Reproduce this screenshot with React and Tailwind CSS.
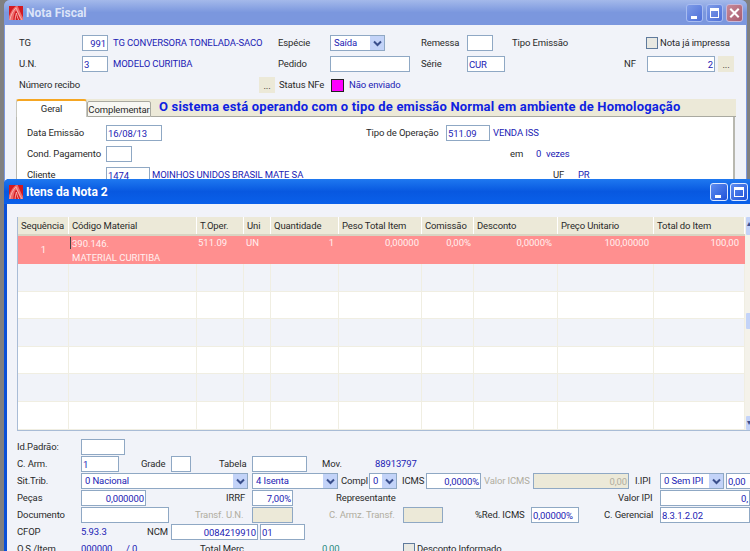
const labelFont = "font-['Roboto','Noto_Sans',sans-serif]";

function Logo() {
  return (
    <svg width="14" height="14" viewBox="0 0 16 16" className="shrink-0">
      <rect width="16" height="16" fill="#d41a20" />
      <path d="M0 16 L0 12 C2 6 5 2 8 0 L10 0 C12 5 14 10 16 13 L16 16 L13 16 C11 11 10 8 8 5 C6 8 5 12 5 16 Z" fill="#ee6a6a" />
      <path d="M1 16 C2 10 5 5 8 2 M8 2 C10 7 12 12 15 16 M7 16 C7 13 8 10 8.5 8 C9 11 10 14 11 16" fill="none" stroke="#f8b8b4" strokeWidth="1" />
    </svg>
  );
}

function WinButton({ kind, active }) {
  const tone = active
    ? "w-[18px] border-[#dce8ff] bg-gradient-to-br from-[#5f8df0] to-[#1f50d8]"
    : "w-[17px] border-[#a8bcf0] bg-gradient-to-br from-[#7f9ce8] to-[#4f6fd8]";
  const close = "w-[17px] border-[#c8b8d8] bg-gradient-to-br from-[#c88a98] to-[#a85c70]";
  return (
    <div className={`h-[18px] rounded-[3px] border relative shrink-0 ${kind === "close" ? close : tone}`}>
      {kind === "min" && <div className="absolute left-[4px] bottom-[2px] w-[6px] h-[3px] bg-white" />}
      {kind === "max" && <div className="absolute left-[3px] top-[3px] right-[3px] bottom-[3px] border border-white border-t-[3px]" />}
      {kind === "close" && (
        <svg viewBox="0 0 16 16" className="absolute inset-0 w-full h-full">
          <path d="M3.5 3.5 L12.5 12.5 M12.5 3.5 L3.5 12.5" stroke="white" strokeWidth="2.2" />
        </svg>
      )}
    </div>
  );
}

function Label({ className = "", children }) {
  return <span className={`text-[#2a2a2a] whitespace-nowrap shrink-0 pt-[1px] ${className}`}>{children}</span>;
}

function Blue({ className = "", children }) {
  return <span className={`text-[#2222b4] whitespace-nowrap shrink-0 pt-[1px] ${className}`}>{children}</span>;
}

function Muted({ className = "", children }) {
  return <span className={`text-[#b0ad9f] whitespace-nowrap shrink-0 pt-[1px] ${className}`}>{children}</span>;
}

function Input({ className = "", right, children }) {
  return (
    <div className={`h-[16px] shrink-0 border border-[#8fa8c4] bg-white text-[#2222b4] px-[1px] leading-[15px] overflow-hidden whitespace-nowrap ${right ? "text-right" : ""} ${className}`}>
      {children}
    </div>
  );
}

function Disabled({ className = "", children }) {
  return (
    <div className={`h-[16px] shrink-0 border border-[#8fa8c4] bg-[#ece9d8] text-[#b0ad9f] text-right px-[1px] leading-[15px] ${className}`}>
      {children}
    </div>
  );
}

function Select({ className = "", children }) {
  return (
    <div className={`h-[16px] shrink-0 border border-[#8fa8c4] bg-white text-[#2222b4] flex items-center pl-[3px] justify-between overflow-hidden ${className}`}>
      <span className="whitespace-nowrap pt-[1px]">{children}</span>
      <div className="w-[14px] h-[14px] shrink-0 bg-[#c3d3f8] flex items-center justify-center">
        <svg width="9" height="7" viewBox="0 0 9 7">
          <path d="M1 1.5 L4.5 5 L8 1.5" fill="none" stroke="#3a4f8c" strokeWidth="2" />
        </svg>
      </div>
    </div>
  );
}

function Dots({ className = "" }) {
  return <div className={`w-[16px] h-[16px] shrink-0 bg-[#ece9d8] text-[#222] text-center leading-[17px] ${className}`}>...</div>;
}

function Check({ className = "" }) {
  return <div className={`w-[12px] h-[12px] shrink-0 border border-[#5f7a9c] bg-[#e8e8e2] ${className}`} />;
}

const columns = [
  ["Sequência", "w-[51px]"],
  ["Código Material", "w-[128px]"],
  ["T.Oper.", "w-[47px]"],
  ["Uni", "w-[27px]"],
  ["Quantidade", "w-[68px]"],
  ["Peso Total Item", "w-[83px]"],
  ["Comissão", "w-[52px]"],
  ["Desconto", "w-[84px]"],
  ["Preço Unitario", "w-[96px]"],
  ["Total do Item", "w-[91px]"],
];

function EmptyRow({ alt, height }) {
  return (
    <div className={`flex ${height} border-b border-[#f0eee2] ${alt ? "bg-[#f1f3f9]" : "bg-white"}`}>
      {columns.map(([name, width]) => (
        <div key={name} className={`${width} h-full border-r border-[#f0eee2] shrink-0`} />
      ))}
    </div>
  );
}

function Scrollbar() {
  return (
    <div className="w-[6px] shrink-0 bg-[#f4f2ea] flex flex-col">
      <div className="h-[18px] ml-[1px] bg-[#c3d3f8] rounded-[1px] text-center text-[#3a4f8c] leading-[14px] text-[8px]">▴</div>
      <div className="h-[78px]" />
      <div className="h-[16px] ml-[1px] bg-[#c3d3f8] rounded-[1px]" />
      <div className="h-[87px]" />
      <div className="h-[14px] ml-[1px] bg-[#c3d3f8] rounded-[1px] text-center text-[#3a4f8c] leading-[13px] text-[8px]">▾</div>
    </div>
  );
}

function ItemsGrid() {
  return (
    <div className="ml-[10px] mt-[13px] w-[745px] flex border-l border-b border-[#a9bcd6]">
      <div className="w-[727px] shrink-0">
        <div className="flex h-[19px] bg-[#ece9d8] border-b-2 border-[#d8d4c2]">
          {columns.map(([name, width]) => (
            <div key={name} className={`${width} shrink-0 border-r border-white pl-[3px] leading-[18px] text-[#2a2a2a] whitespace-nowrap overflow-hidden`}>
              {name}
            </div>
          ))}
        </div>
        <div className="flex h-[28px] bg-[#ff8f8f] text-[#fff0f0] leading-[13px] tracking-normal">
          <div className="w-[51px] text-center leading-[28px]">1</div>
          <div className="w-[128px] pl-[3px] pt-[1px] leading-[14px] relative">
            <div className="absolute left-[1px] top-[1px] w-[1px] h-[12px] bg-[#444]" />
            <div>390.146.</div>
            <div>MATERIAL CURITIBA</div>
          </div>
          <div className="w-[47px] pl-[1px]">511.09</div>
          <div className="w-[27px] pl-[2px]">UN</div>
          <div className="w-[68px] text-right pr-[5px]">1</div>
          <div className="w-[83px] text-right pr-[3px]">0,00000</div>
          <div className="w-[52px] text-right pr-[3px]">0,00%</div>
          <div className="w-[84px] text-right pr-[6px]">0,0000%</div>
          <div className="w-[96px] text-right pr-[5px]">100,00000</div>
          <div className="w-[91px] text-right pr-[6px]">100,00</div>
        </div>
        <EmptyRow alt height="h-[28px]" />
        <EmptyRow height="h-[27px]" />
        <EmptyRow alt height="h-[28px]" />
        <EmptyRow height="h-[27px]" />
        <EmptyRow alt height="h-[28px]" />
        <EmptyRow height="h-[28px]" />
      </div>
      <Scrollbar />
    </div>
  );
}

function NotaFiscal() {
  return (
    <div className="absolute left-[4px] top-0 w-[743px] h-[200px] rounded-t-[6px] bg-[#7b97de] overflow-hidden">
      <div className="h-[25px] flex items-center pl-[5px] pr-[4px] bg-gradient-to-b from-[#a4b9ea] via-[#7b97de] to-[#7b97de]">
        <Logo />
        <span className="ml-[3px] text-[12px] tracking-normal font-bold text-[#dbe4f8]">Nota Fiscal</span>
        <div className="ml-auto flex gap-[3px]">
          <WinButton kind="min" />
          <WinButton kind="max" />
          <WinButton kind="close" />
        </div>
      </div>
      <div className="mx-[1px] h-[175px] bg-[#f1f3f9] pt-[10px]">
        <div className="flex items-center h-[16px]">
          <Label className="ml-[14px] w-[63px]">TG</Label>
          <Input right className="w-[26px]">991</Input>
          <Blue className="ml-[5px] w-[165px]">TG CONVERSORA TONELADA-SACO</Blue>
          <Label className="w-[52px]">Espécie</Label>
          <Select className="w-[55px]">Saída</Select>
          <Label className="ml-[36px] w-[46px]">Remessa</Label>
          <Input className="w-[26px]" />
          <Label className="ml-[19px] w-[134px]">Tipo Emissão</Label>
          <Check />
          <Label className="ml-[2px]">Nota já impressa</Label>
        </div>
        <div className="flex items-center h-[16px] mt-[5px]">
          <Label className="ml-[14px] w-[63px]">U.N.</Label>
          <Input className="w-[26px]">3</Input>
          <Blue className="ml-[5px] w-[165px]">MODELO CURITIBA</Blue>
          <Label className="w-[52px]">Pedido</Label>
          <Input className="w-[80px]" />
          <Label className="ml-[11px] w-[46px]">Série</Label>
          <Input className="w-[38px]">CUR</Input>
          <Label className="ml-[119px] w-[23px]">NF</Label>
          <Input right className="w-[68px]">2</Input>
          <Dots className="ml-[3px]" />
        </div>
        <div className="flex items-center h-[16px] mt-[5px]">
          <Label className="ml-[14px] w-[240px]">Número recibo</Label>
          <Dots />
          <Label className="ml-[4px] w-[52px]">Status NFe</Label>
          <div className="w-[13px] h-[13px] bg-[#ff00ff] border border-[#222]" />
          <Blue className="ml-[5px]">Não enviado</Blue>
        </div>
        <div className="ml-[11px] mt-[6px] w-[720px] h-[18px] bg-[#ece9d8] flex items-end">
          <div className="w-[71px] shrink-0 h-[18px] bg-white border-t-2 border-[#f5a623] border-x border-x-[#c8c8c0] rounded-t-[3px] text-center text-[#2a2a2a] leading-[15px]">Geral</div>
          <div className="w-[64px] shrink-0 h-[16px] bg-[#f7f7f3] border border-[#a9a9a0] rounded-t-[2px] text-center text-[#2a2a2a] leading-[15px] whitespace-nowrap">Complementar</div>
          <div className="flex-1 h-[18px] border-b border-[#a9a9a0] pl-[8px] leading-[16px] text-[13px] tracking-[0.17px] font-bold text-[#0f1fe0] whitespace-nowrap">O sistema está operando com o tipo de emissão Normal em ambiente de Homologação</div>
        </div>
        <div className="ml-[11px] w-[719px] h-[70px] bg-white border-r-2 border-l border-[#b8b8b0] pt-[8px]">
          <div className="flex items-center h-[16px]">
            <Label className="ml-[10px] w-[79px]">Data Emissão</Label>
            <Input className="w-[56px]">16/08/13</Input>
            <Label className="ml-[204px] w-[80px]">Tipo de Operação</Label>
            <Input className="w-[44px]">511.09</Input>
            <Blue className="ml-[3px]">VENDA ISS</Blue>
          </div>
          <div className="flex items-center h-[16px] mt-[5px]">
            <Label className="ml-[10px] w-[79px]">Cond. Pagamento</Label>
            <Input className="w-[26px]" />
            <Label className="ml-[378px] w-[26px]">em</Label>
            <Blue className="w-[10px]">0</Blue>
            <Blue>vezes</Blue>
          </div>
          <div className="flex items-center h-[16px] mt-[5px]">
            <Label className="ml-[10px] w-[79px]">Cliente</Label>
            <Input className="w-[44px]">1474</Input>
            <Blue className="ml-[2px] w-[401px]">MOINHOS UNIDOS BRASIL MATE SA</Blue>
            <Label className="w-[25px]">UF</Label>
            <Blue>PR</Blue>
          </div>
        </div>
      </div>
    </div>
  );
}

function ItensDaNota() {
  return (
    <div className="absolute left-[4px] top-[179px] w-[760px] h-[372px] bg-[#0a50d8] rounded-t-[5px] overflow-hidden">
      <div className="h-[25px] flex items-center pl-[5px] pr-[2px] w-[746px] bg-gradient-to-b from-[#1f78f0] via-[#0858e0] to-[#0a60ea]">
        <Logo />
        <span className="ml-[3px] text-[12px] tracking-normal font-bold text-white">Itens da Nota 2</span>
        <div className="ml-auto flex gap-[2px]">
          <WinButton kind="min" active />
          <WinButton kind="max" active />
        </div>
      </div>
      <div className="ml-[3px] h-[347px] bg-[#f1f3f9] overflow-hidden">
        <ItemsGrid />
        <div className="mt-[8px] flex items-center h-[16px]">
          <Label className="ml-[10px] w-[64px]">Id.Padrão:</Label>
          <Input className="w-[44px]" />
        </div>
        <div className="mt-[1px] flex items-center h-[16px]">
          <Label className="ml-[10px] w-[64px]">C. Arm.</Label>
          <Input className="w-[38px]">1</Input>
          <Label className="ml-[22px] w-[30px]">Grade</Label>
          <Input className="w-[20px]" />
          <Label className="ml-[28px] w-[33px]">Tabela</Label>
          <Input className="w-[55px]" />
          <Label className="ml-[15px] w-[53px]">Mov.</Label>
          <Blue>88913797</Blue>
        </div>
        <div className="mt-[1px] flex items-center h-[16px]">
          <Label className="ml-[10px] w-[64px]">Sit.Trib.</Label>
          <Select className="w-[167px]">0 Nacional</Select>
          <Select className="ml-[4px] w-[86px]">4 Isenta</Select>
          <Label className="ml-[3px] w-[28px]">Compl</Label>
          <Select className="w-[28px]">0</Select>
          <Label className="ml-[5px] w-[24px]">ICMS</Label>
          <Input right className="w-[55px]">0,0000%</Input>
          <Muted className="ml-[3px] w-[49px]">Valor ICMS</Muted>
          <Disabled className="w-[96px]">0,00</Disabled>
          <Label className="ml-[6px] w-[25px]">I.IPI</Label>
          <Select className="w-[64px]">0 Sem IPI</Select>
          <Input className="ml-[2px] w-[30px]">0,00</Input>
        </div>
        <div className="mt-[1px] flex items-center h-[16px]">
          <Label className="ml-[10px] w-[64px]">Peças</Label>
          <Input right className="w-[65px]">0,000000</Input>
          <Label className="ml-[80px] w-[26px]">IRRF</Label>
          <Input right className="w-[41px]">7,00%</Input>
          <Label className="ml-[43px] w-[282px]">Representante</Label>
          <Label className="w-[42px]">Valor IPI</Label>
          <Input right className="w-[90px]">0,</Input>
        </div>
        <div className="mt-[1px] flex items-center h-[16px]">
          <Label className="ml-[10px] w-[64px]">Documento</Label>
          <Input className="w-[88px]" />
          <Muted className="ml-[26px] w-[57px]">Transf. U.N.</Muted>
          <Disabled className="w-[41px]" />
          <Muted className="ml-[36px] w-[74px]">C. Armz. Transf.</Muted>
          <Disabled className="w-[40px]" />
          <Label className="ml-[32px] w-[56px]">%Red. ICMS</Label>
          <Input className="w-[48px]">0,00000%</Input>
          <Label className="ml-[25px] w-[56px]">C. Gerencial</Label>
          <Input className="w-[90px]">8.3.1.2.02</Input>
        </div>
        <div className="mt-[1px] flex items-center h-[16px]">
          <Label className="ml-[10px] w-[64px]">CFOP</Label>
          <Blue className="w-[66px]">5.93.3</Blue>
          <Label className="w-[24px]">NCM</Label>
          <Input right className="w-[87px]">0084219910</Input>
          <Input className="ml-[2px] w-[45px]">01</Input>
        </div>
        <div className="mt-[1px] flex items-center h-[16px]">
          <Label className="ml-[10px] w-[64px]">O.S./Item</Label>
          <Blue className="w-[45px]">000000</Blue>
          <Blue className="w-[74px]">/ 0</Blue>
          <Label className="w-[122px]">Total Merc.</Label>
          <span className="w-[81px] text-[#2a8a80]">0,00</span>
          <Check />
          <Label className="ml-[2px]">Desconto Informado</Label>
        </div>
      </div>
    </div>
  );
}

export default function App() {
  return (
    <div className={`relative w-[750px] h-[551px] overflow-hidden bg-[#808080] text-[9.5px] tracking-[-0.12px] ${labelFont}`}>
      <NotaFiscal />
      <ItensDaNota />
    </div>
  );
}
